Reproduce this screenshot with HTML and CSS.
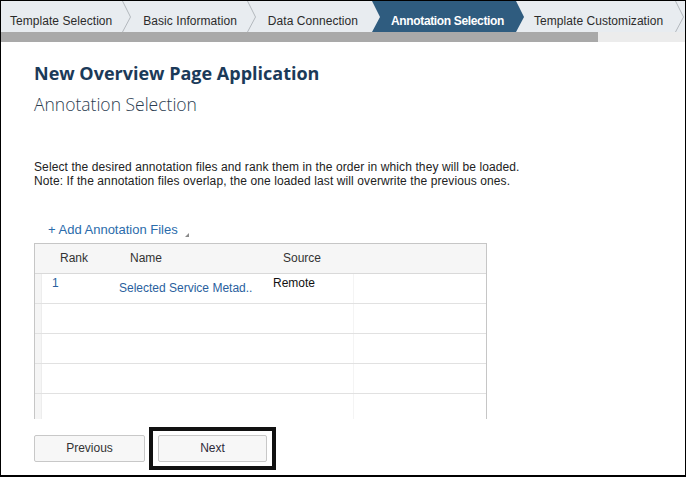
FILE: index.html
```html
<!DOCTYPE html>
<html>
<head>
<meta charset="utf-8">
<link rel="stylesheet" href="styles.css">
</head>
<body>
<div class="frame">
  <nav class="crumbs">
    <span class="crumb first">Template Selection</span>
    <svg class="sep" viewBox="0 0 9 31"><polyline points="0.5,0 8.5,16 0.5,31"/></svg>
    <span class="crumb">Basic Information</span>
    <svg class="sep" viewBox="0 0 9 31"><polyline points="0.5,0 8.5,16 0.5,31"/></svg>
    <span class="crumb">Data Connection</span>
    <span class="crumb active">Annotation Selection</span>
    <span class="crumb after-active">Template Customization</span>
    <svg class="sep last-sep" viewBox="0 0 9 31"><polyline points="0.5,0 8.5,16 0.5,31"/></svg>
  </nav>
  <div class="scrollbar"><div class="thumb"></div></div>
  <main class="content">
    <h1 class="title">New Overview Page Application</h1>
    <h2 class="subtitle">Annotation Selection</h2>
    <p class="desc">Select the desired annotation files and rank them in the order in which they will be loaded.<br>Note: If the annotation files overlap, the one loaded last will overwrite the previous ones.</p>
    <div class="add"><span class="add-link">+ Add Annotation Files</span><svg class="tri" viewBox="0 0 4 4"><polygon points="4,0 4,4 0,4"/></svg></div>
    <div class="tbl">
      <div class="row head">
        <div class="sel"></div>
        <div class="cell h-rank">Rank</div>
        <div class="cell h-name">Name</div>
        <div class="cell h-source">Source</div>
        <div class="cell rest"></div>
      </div>
      <div class="row">
        <div class="sel"></div>
        <div class="cell rank">1</div>
        <div class="cell name">Selected Service Metad..</div>
        <div class="cell source">Remote</div>
        <div class="cell rest"></div>
      </div>
      <div class="row"><div class="sel"></div><div class="cell"></div><div class="cell"></div><div class="cell"></div><div class="cell rest"></div></div>
      <div class="row"><div class="sel"></div><div class="cell"></div><div class="cell"></div><div class="cell"></div><div class="cell rest"></div></div>
      <div class="row"><div class="sel"></div><div class="cell"></div><div class="cell"></div><div class="cell"></div><div class="cell rest"></div></div>
      <div class="row"><div class="sel"></div><div class="cell"></div><div class="cell"></div><div class="cell"></div><div class="cell rest"></div></div>
    </div>
    <div class="actions">
      <button class="btn prev">Previous</button>
      <div class="focus-ring"><button class="btn next">Next</button></div>
    </div>
  </main>
</div>
</body>
</html>
```
FILE: styles.css
```css
body {
  margin: 0;
  background: #fff;
}

.frame {
  width: 686px;
  height: 477px;
  box-sizing: border-box;
  border: 1px solid #000;
  border-bottom-width: 2px;
  background: #fff;
  overflow: hidden;
  font-family: "Liberation Sans", Arial, sans-serif;
}

/* breadcrumb */
.crumbs {
  display: flex;
  height: 31px;
  background: #e8ecf0;
  font-size: 12px;
  color: #2b2b2b;
}

.crumb {
  padding-top: 13px;
  line-height: 14px;
  white-space: nowrap;
  flex: none;
  letter-spacing: 0.05px;
}

.first {
  margin-left: 9px;
}

.sep {
  flex: none;
  width: 9px;
  height: 31px;
  margin: 0 12px 0 10px;
}

.last-sep {
  margin-left: 12px;
}

.sep polyline {
  fill: none;
  stroke: #b3b8bd;
  stroke-width: 1;
}

.active {
  margin-left: 14px;
  padding: 13px 20px 0 19px;
  background: #2f5c7f;
  color: #fff;
  font-weight: bold;
  letter-spacing: -0.35px;
  clip-path: polygon(0 0, calc(100% - 8px) 0, 100% 16px, calc(100% - 8px) 100%, 0 100%, 8px 16px);
}

.after-active {
  margin-left: 10px;
}

.scrollbar {
  display: flex;
  height: 10px;
  background: #ececec;
}

.thumb {
  width: 597px;
  background: #a9a9a9;
}

/* content */
.content {
  padding: 0 33px;
}

.title {
  margin: 21px 0 0;
  font: 700 18px/20px "Open Sans", "Noto Sans", sans-serif;
  color: #1b3a59;
}

.subtitle {
  margin: 11px 0 0;
  font: 300 17.5px/20px "Open Sans", "Noto Sans", sans-serif;
  color: #2b3d50;
}

.desc {
  margin: 46px 0 0;
  font-size: 12px;
  line-height: 14.3px;
  letter-spacing: 0.1px;
  color: #222;
}

.add {
  margin-top: 33px;
  padding-left: 14px;
  display: flex;
  align-items: flex-end;
  font-size: 13px;
  line-height: 16px;
  color: #2b6cab;
}

.tri {
  width: 4px;
  height: 4px;
  margin: 0 0 0 7px;
  position: relative;
  top: -1px;
}

.tri polygon {
  fill: #8a8a8a;
}

/* table */
.tbl {
  margin-top: 5px;
  width: 453px;
  height: 176px;
  box-sizing: border-box;
  border: 1px solid #c6c6c6;
  border-bottom: none;
  overflow: hidden;
  font-size: 12px;
}

.row {
  display: grid;
  grid-template-columns: 7px 68px 155px 88px 1fr;
  height: 30px;
  box-sizing: border-box;
  border-bottom: 1px solid #e1e1e1;
}

.row.head {
  height: 30px;
  background: #f6f6f6;
  border-bottom-color: #d9d9d9;
}

.sel {
  background: #f5f5f5;
  border-right: 1px solid #ededed;
}

.head .sel {
  background: #f6f6f6;
  border-right: none;
}

.cell {
  line-height: 14px;
}

.rest {
  border-left: 1px solid #f4f4f4;
}

.head .rest {
  border-left: none;
}

.head .cell {
  line-height: 29px;
  color: #333;
}

.h-rank { padding-left: 18px; }
.h-name { padding-left: 20px; }
.h-source { padding-left: 18px; }

.rank {
  padding: 2px 0 0 10px;
  color: #2a5f9e;
}

.name {
  padding: 7px 0 0 9px;
  color: #2a5f9e;
}

.source {
  padding: 2px 0 0 8px;
  color: #111;
}

/* buttons */
.actions {
  margin-top: 8px;
  display: flex;
  align-items: center;
  gap: 4px;
}

.btn {
  height: 27px;
  box-sizing: border-box;
  border: 1px solid #c8c8c8;
  border-radius: 2px;
  background: #f7f7f7;
  font: 12px "Liberation Sans", Arial, sans-serif;
  color: #333;
  padding: 0;
}

.prev {
  width: 111px;
}

.next {
  width: 109px;
  color: #2e2a3a;
}

.focus-ring {
  border: 4px solid #111;
  padding: 4px 5px;
  display: flex;
}
```
